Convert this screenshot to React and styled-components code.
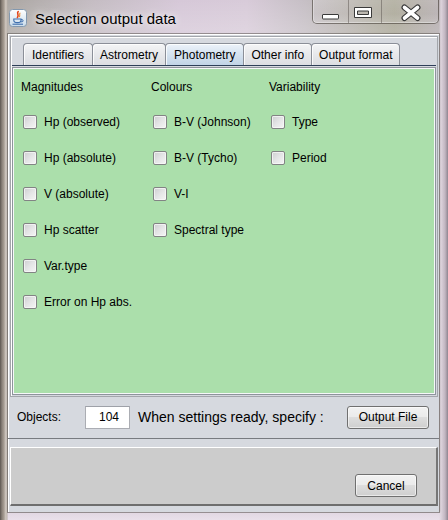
import React from "react";
import styled, { createGlobalStyle } from "styled-components";

const GlobalStyle = createGlobalStyle`
  html, body { margin: 0; padding: 0; width: 448px; height: 520px; overflow: hidden; }
  body { font-family: "Liberation Sans", Arial, sans-serif; color: #000; }
  * { box-sizing: border-box; }
`;

const Window = styled.div`
  width: 448px;
  height: 520px;
  display: flex;
  flex-direction: column;
  padding: 0 9px 8px 8px;
  background:
    linear-gradient(90deg, #5d5650 0px, #8b8279 2px, #a79d93 4px, #d5cdc6 6px, #b7aea6 7px, rgba(183,174,166,0) 8px),
    linear-gradient(270deg, #8f8590 0px, #c2b6c1 3px, #ddd3dc 7px, rgba(221,211,220,0) 9px),
    linear-gradient(0deg, #e9e0ea 0px, #e2d8e3 7px, rgba(226,216,227,0) 9px),
    linear-gradient(180deg, rgba(255,255,255,0.0) 0px, rgba(255,255,255,0.18) 30px, rgba(255,255,255,0) 60px),
    linear-gradient(90deg, #a9a5a0 0%, #c4bcc2 20%, #d6c8d8 40%, #d8cbd9 55%, #c6bfc5 68%, #a9a696 88%, #b6adb3 100%);
`;

const TitleBar = styled.div`
  height: 34px;
  flex-shrink: 0;
  display: flex;
  align-items: flex-start;
`;

const TitleLeft = styled.div`
  height: 34px;
  display: flex;
  align-items: center;
  gap: 8px;
  padding: 2px 0 0 1px;
`;

const Title = styled.span`
  font-size: 15px;
  color: #000;
  text-shadow: 0 0 6px rgba(255,255,255,0.9), 0 0 12px rgba(255,255,255,0.7);
`;

const WinButtons = styled.div`
  margin-left: auto;
  height: 24px;
  display: flex;
  border: 1px solid rgba(70, 64, 58, 0.6);
  border-top: none;
  border-radius: 0 0 5px 5px;
  overflow: hidden;
  box-shadow: inset 0 -1px 0 rgba(255,255,255,0.35), inset 1px 0 0 rgba(255,255,255,0.3);
`;

const WinButton = styled.div`
  width: ${(p) => p.$w}px;
  height: 100%;
  border-left: ${(p) => (p.$first ? "none" : "1px solid rgba(80, 74, 68, 0.45)")};
  background: linear-gradient(180deg, rgba(255,255,255,0.18), rgba(255,255,255,0.04) 60%, rgba(255,255,255,0.12));
  display: flex;
`;

const Client = styled.div`
  flex: 1;
  display: flex;
  flex-direction: column;
  background: #d6d9df;
  outline: 1px solid rgba(90, 84, 80, 0.55);
  box-shadow: inset 1px 1px 0 #ffffff;
`;

const TabArea = styled.div`
  margin: 2px 1px 0 2px;
  border: 1px solid #a3a6ab;
  box-shadow: inset 1px 1px 0 #ffffff;
  padding: 6px 1px 1px 1px;
  display: flex;
  flex-direction: column;
`;

const TabStrip = styled.div`
  display: flex;
  align-items: flex-end;
  height: 23px;
  padding-left: 11px;
  border-bottom: 1px solid #2e3f58;
  margin-bottom: 1px;
`;

const Tab = styled.div`
  height: 22px;
  padding: 0 ${(p) => p.$pad}px;
  margin-left: ${(p) => (p.$first ? "0" : "-1px")};
  border: 1px solid #8b8f98;
  border-bottom: none;
  border-radius: 4px 4px 0 0;
  display: flex;
  align-items: center;
  font-size: 12px;
  color: #000;
  position: relative;
  z-index: ${(p) => (p.$active ? 1 : 0)};
  box-shadow: inset 1px 1px 0 rgba(255,255,255,0.8);
  background: ${(p) =>
    p.$active
      ? "linear-gradient(180deg, #edf3fa 0%, #d9e5f1 40%, #c2d4e6 100%)"
      : "linear-gradient(180deg, #f4f5f6 0%, #e8e9ec 45%, #dcdee2 100%)"};
`;

const ContentPanel = styled.div`
  border: 1px solid #8e949c;
  padding: 1px;
  background: #f6f7f9;
`;

const Columns = styled.div`
  height: 324px;
  background: #abdfab;
  padding-left: 7px;
  display: flex;
`;

const Column = styled.div`
  width: ${(p) => p.$w}px;
  display: flex;
  flex-direction: column;
`;

const Header = styled.div`
  height: 36px;
  display: flex;
  align-items: center;
  font-size: 12px;
`;

const Option = styled.label`
  height: 36px;
  display: flex;
  align-items: center;
  gap: 7px;
  padding: 0 0 2px 2px;
  font-size: 12px;
`;

const Box = styled.span`
  width: 14px;
  height: 14px;
  flex-shrink: 0;
  border: 1px solid #828384;
  border-radius: 2px;
  background: linear-gradient(135deg, #cdced0 0%, #e4e5e6 50%, #f5f5f5 100%);
  box-shadow: inset 0 0 0 1px rgba(248,248,248,0.75);
`;

const ObjectsRow = styled.div`
  height: 42px;
  display: flex;
  align-items: center;
  padding: 0 10px 1px 9px;
  border-bottom: 1px solid #787b80;
  font-size: 12px;
`;

const ObjLabel = styled.span`
  width: 68px;
`;

const Field = styled.div`
  width: 45px;
  height: 23px;
  border: 1px solid #abadb3;
  border-top-color: #9ea1a8;
  background: #ffffff;
  display: flex;
  align-items: center;
  justify-content: flex-end;
  padding-right: 10px;
  font-size: 12px;
`;

const Hint = styled.span`
  margin-left: 8px;
  font-size: 14px;
`;

const Button = styled.button`
  width: ${(p) => p.$w}px;
  height: 23px;
  margin-left: ${(p) => (p.$push ? "auto" : "0")};
  padding: 0;
  border: 1px solid #707070;
  border-radius: 3px;
  background: linear-gradient(180deg, #f2f2f2 0%, #ebebeb 46%, #dddddd 50%, #cfcfcf 100%);
  box-shadow: inset 0 0 0 1px rgba(255,255,255,0.55);
  font-family: "Liberation Sans", Arial, sans-serif;
  font-size: 12px;
  color: #000;
`;

const LowerPanel = styled.div`
  height: 59px;
  margin: 8px 1px 0 2px;
  background: #cccccc;
  border-top: 1px solid #ffffff;
  border-left: 1px solid #ffffff;
  border-right: 2px solid #767676;
  border-bottom: 2px solid #6e6e6e;
  display: flex;
  justify-content: flex-end;
  align-items: flex-end;
  padding: 0 19px 7px 0;
`;

const JavaIcon = () => (
  <svg width="18" height="18" viewBox="0 0 18 18">
    <defs>
      <linearGradient id="jbg" x1="0" y1="0" x2="0" y2="1">
        <stop offset="0" stopColor="#ffffff" />
        <stop offset="1" stopColor="#c9dbea" />
      </linearGradient>
    </defs>
    <rect x="0.5" y="0.5" width="17" height="17" rx="3" fill="url(#jbg)" stroke="#8398ae" />
    <path d="M9.2 2.5 C7.2 4.6 10.6 5.6 8.4 8.6" stroke="#e2461c" strokeWidth="1.6" fill="none" strokeLinecap="round" />
    <path d="M11 4.2 C9.9 5.4 11.5 6.2 10.4 7.6" stroke="#f08a2a" strokeWidth="1.1" fill="none" strokeLinecap="round" />
    <path d="M4.8 10 H12 V11.2 C12 12.8 10.6 13.6 8.4 13.6 C6.2 13.6 4.8 12.8 4.8 11.2 Z" fill="none" stroke="#3f6fae" strokeWidth="1.1" />
    <path d="M12 10.6 H13 A1.1 1.1 0 0 1 13 12.8 H11.6" fill="none" stroke="#3f6fae" strokeWidth="1" />
    <path d="M3.5 15.2 H14" stroke="#3f6fae" strokeWidth="1.1" />
  </svg>
);

const MinGlyph = () => (
  <svg width="34" height="24" viewBox="0 0 34 24">
    <rect x="9.5" y="14.5" width="16" height="4.5" rx="0.5" fill="#ffffff" stroke="#3a3a3a" />
  </svg>
);

const MaxGlyph = () => (
  <svg width="32" height="24" viewBox="0 0 32 24">
    <path
      d="M5.5 7.5 H22.5 V17.5 H5.5 Z M8.5 11 V14.5 H19.5 V11 Z"
      fill="#ffffff"
      stroke="#3a3a3a"
      fillRule="evenodd"
    />
  </svg>
);

const CloseGlyph = () => (
  <svg width="56" height="24" viewBox="0 0 56 24">
    <path d="M22.5 7.5 L35.5 18 M35.5 7.5 L22.5 18" stroke="#3a3a3a" strokeWidth="6" strokeLinecap="round" />
    <path d="M22.5 7.5 L35.5 18 M35.5 7.5 L22.5 18" stroke="#ffffff" strokeWidth="3.6" strokeLinecap="round" />
  </svg>
);

const tabs = [
  { t: "Identifiers", pad: 8 },
  { t: "Astrometry", pad: 7 },
  { t: "Photometry", pad: 8 },
  { t: "Other info", pad: 7 },
  { t: "Output format", pad: 7 },
];

const columns = [
  { w: 130, title: "Magnitudes", items: ["Hp (observed)", "Hp (absolute)", "V (absolute)", "Hp scatter", "Var.type", "Error on Hp abs."] },
  { w: 118, title: "Colours", items: ["B-V (Johnson)", "B-V (Tycho)", "V-I", "Spectral type"] },
  { w: 120, title: "Variability", items: ["Type", "Period"] },
];

export default function App() {
  return (
    <>
      <GlobalStyle />
      <Window>
        <TitleBar>
          <TitleLeft>
            <JavaIcon />
            <Title>Selection output data</Title>
          </TitleLeft>
          <WinButtons>
            <WinButton $w={35} $first>
              <MinGlyph />
            </WinButton>
            <WinButton $w={33}>
              <MaxGlyph />
            </WinButton>
            <WinButton $w={57}>
              <CloseGlyph />
            </WinButton>
          </WinButtons>
        </TitleBar>
        <Client>
          <TabArea>
            <TabStrip>
              {tabs.map((tab, i) => (
                <Tab key={tab.t} $pad={tab.pad} $first={i === 0} $active={tab.t === "Photometry"}>
                  {tab.t}
                </Tab>
              ))}
            </TabStrip>
            <ContentPanel>
              <Columns>
                {columns.map((c) => (
                  <Column key={c.title} $w={c.w}>
                    <Header>{c.title}</Header>
                    {c.items.map((it) => (
                      <Option key={it}>
                        <Box />
                        {it}
                      </Option>
                    ))}
                  </Column>
                ))}
              </Columns>
            </ContentPanel>
          </TabArea>
          <ObjectsRow>
            <ObjLabel>Objects:</ObjLabel>
            <Field>104</Field>
            <Hint>When settings ready, specify :</Hint>
            <Button $w={82} $push>Output File</Button>
          </ObjectsRow>
          <LowerPanel>
            <Button $w={62}>Cancel</Button>
          </LowerPanel>
        </Client>
      </Window>
    </>
  );
}
